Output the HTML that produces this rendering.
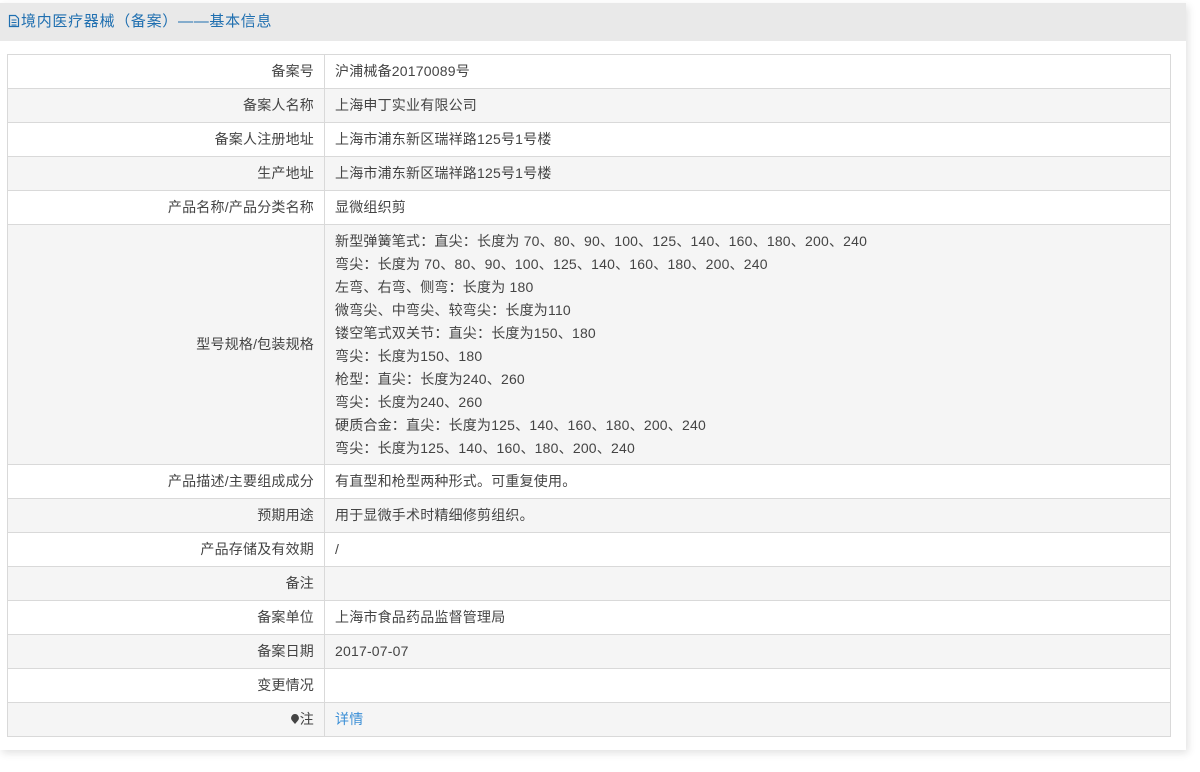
<!DOCTYPE html>
<html><head><meta charset="utf-8"><style>
html,body{margin:0;padding:0;background:#fff;width:1200px;height:772px;overflow:hidden}
body{font-family:"Liberation Sans","Noto Sans CJK SC",sans-serif;font-size:14px;color:#444;letter-spacing:0.2px}
.panel{position:absolute;left:0;top:3px;width:1186px;height:747px;background:#fff;box-shadow:2px 3px 8px rgba(0,0,0,0.12)}
.hdr{height:38px;background:#e9e9e9;line-height:38px;padding-left:8px;color:#1f6fb0;font-size:15px;letter-spacing:0.7px}
table{position:absolute;left:7px;top:51px;width:1164px;border-collapse:collapse;border:1px solid #d6d6d6}
td{border:1px solid #d9d9d9;height:33px;padding:0 10px;line-height:23px;vertical-align:middle}
td.l{width:296px;text-align:right;}
tr:nth-child(even) td{background:#f5f5f5}
tr.m td{height:239px}
a{color:#3b8fd6;text-decoration:none}
</style></head><body>
<div class="panel">
<div class="hdr"><svg width="12" height="14" viewBox="0 0 12 14" style="vertical-align:-2px;margin-right:1px"><path d="M1.5 1.5h6l3 3v8h-9z" fill="none" stroke="#1f6fb0" stroke-width="1.2"/><path d="M3.5 6h5M3.5 8.5h5M3.5 11h5" stroke="#1f6fb0" stroke-width="1"/></svg>境内医疗器械（备案）——基本信息</div>
<table>
<tr><td class="l">备案号</td><td>沪浦械备20170089号</td></tr>
<tr><td class="l">备案人名称</td><td>上海申丁实业有限公司</td></tr>
<tr><td class="l">备案人注册地址</td><td>上海市浦东新区瑞祥路125号1号楼</td></tr>
<tr><td class="l">生产地址</td><td>上海市浦东新区瑞祥路125号1号楼</td></tr>
<tr><td class="l">产品名称/产品分类名称</td><td>显微组织剪</td></tr>
<tr class="m"><td class="l">型号规格/包装规格</td><td>新型弹簧笔式：直尖：长度为 70、80、90、100、125、140、160、180、200、240<br>弯尖：长度为 70、80、90、100、125、140、160、180、200、240<br>左弯、右弯、侧弯：长度为 180<br>微弯尖、中弯尖、较弯尖：长度为110<br>镂空笔式双关节：直尖：长度为150、180<br>弯尖：长度为150、180<br>枪型：直尖：长度为240、260<br>弯尖：长度为240、260<br>硬质合金：直尖：长度为125、140、160、180、200、240<br>弯尖：长度为125、140、160、180、200、240</td></tr>
<tr><td class="l">产品描述/主要组成成分</td><td>有直型和枪型两种形式。可重复使用。</td></tr>
<tr><td class="l">预期用途</td><td>用于显微手术时精细修剪组织。</td></tr>
<tr><td class="l">产品存储及有效期</td><td>/</td></tr>
<tr><td class="l">备注</td><td></td></tr>
<tr><td class="l">备案单位</td><td>上海市食品药品监督管理局</td></tr>
<tr><td class="l">备案日期</td><td>2017-07-07</td></tr>
<tr><td class="l">变更情况</td><td></td></tr>
<tr><td class="l"><svg width="10" height="12" viewBox="0 0 10 12" style="vertical-align:-1px"><path d="M5 1a4 4 0 0 1 3 6.5L5 11 2 7.5A4 4 0 0 1 5 1z" fill="#444"/></svg>注</td><td><a>详情</a></td></tr>
</table>
</div>
</body></html>
